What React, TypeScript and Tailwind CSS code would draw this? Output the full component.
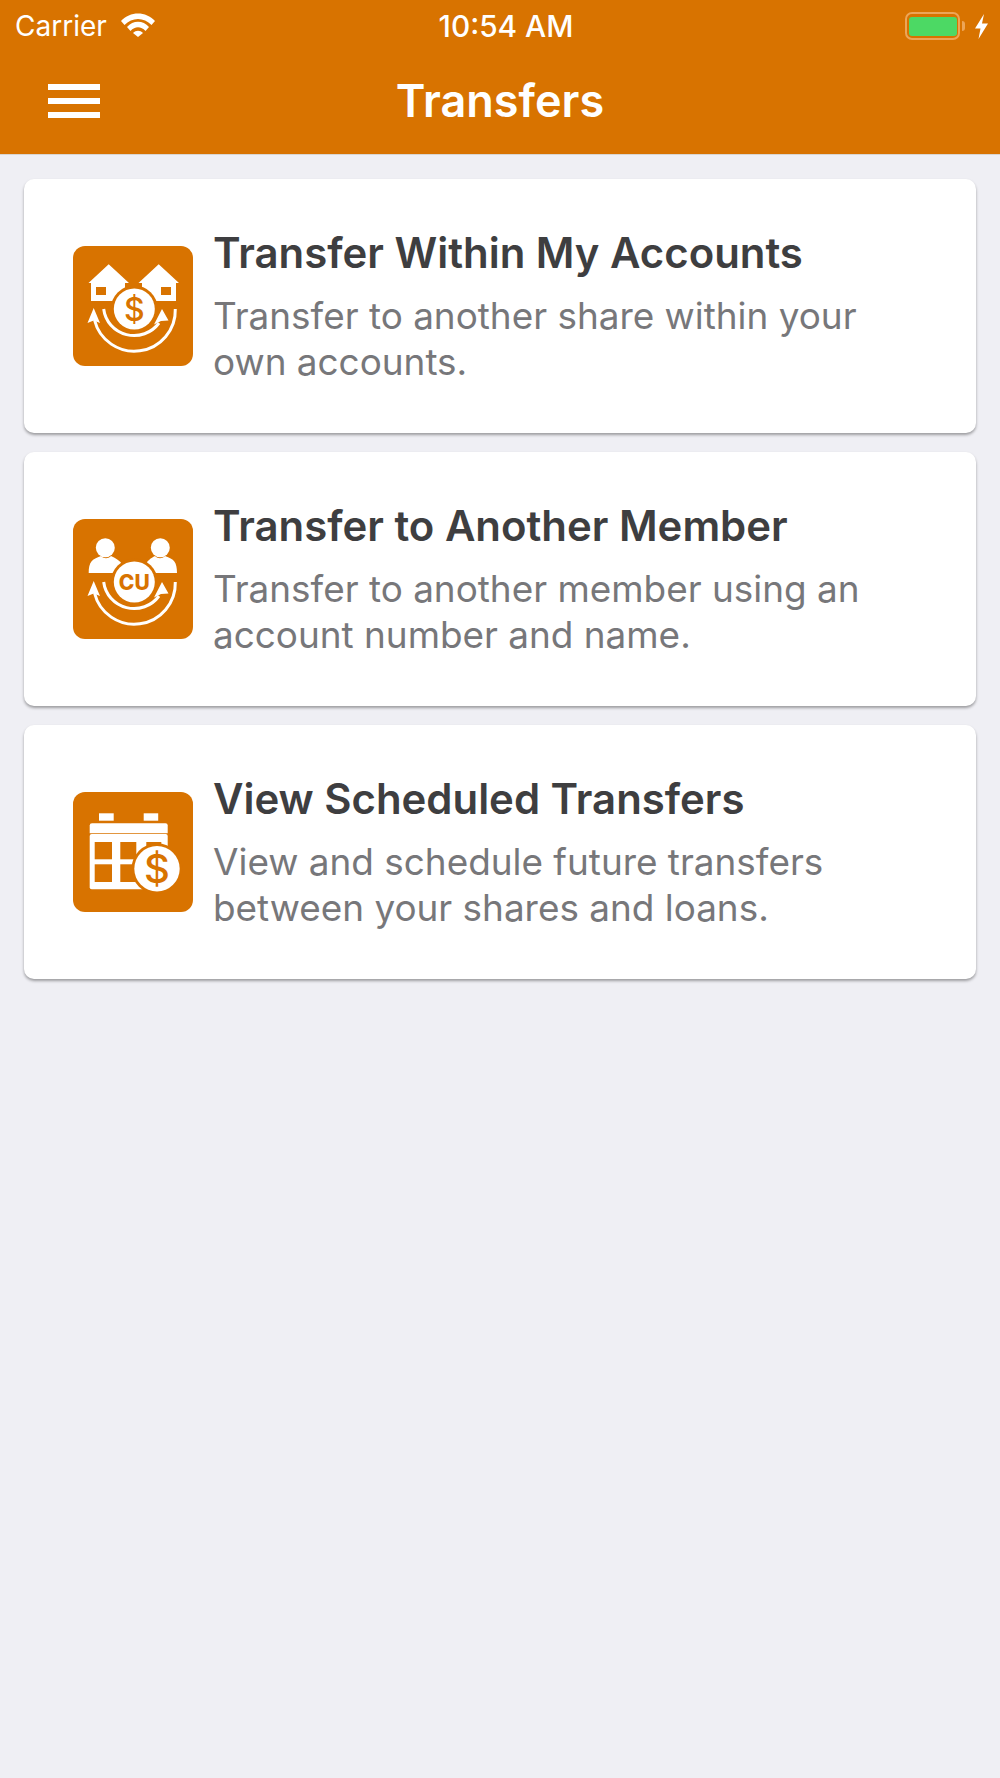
import type { ReactNode } from "react";

const ORANGE = "#d87300";

function Arcs() {
  return (
    <g>
      <path d="M30.7 63 A30.6 30 0 0 0 86 77" fill="none" stroke="#fff" strokeWidth="3" />
      <path d="M102.3 63 A41 41 0 0 1 21.5 74" fill="none" stroke="#fff" strokeWidth="3" />
      <path d="M20.7 62 L14.500 77 L20.7 74.500 L27 77 Z" fill="#fff" />
      <path d="M89 63 L81 78.500 L88 75 L95.500 74.500 Z" fill="#fff" />
    </g>
  );
}

function HousesIcon() {
  return (
    <svg viewBox="0 0 120 120" className="h-[120px] w-[120px]">
      <path d="M35.7 18.3 L56 37 L52 37 L52 55 L18 55 L18 37 L15.5 37 Z" fill="#fff" />
      <rect x="23" y="41" width="10" height="8" fill={ORANGE} />
      <path d="M85.7 18.3 L106 37 L103 37 L103 55 L69 55 L69 37 L65.5 37 Z" fill="#fff" />
      <rect x="88" y="41" width="10" height="8" fill={ORANGE} />
      <circle cx="61.3" cy="63" r="23.5" fill={ORANGE} />
      <Arcs />
      <circle cx="61.3" cy="63" r="20.5" fill="#fff" />
      <text x="61.3" y="74.500" textAnchor="middle" fontSize="32" fontWeight="500" fontFamily="Inter, sans-serif" fill={ORANGE}>$</text>
    </svg>
  );
}

function MembersIcon() {
  return (
    <svg viewBox="0 0 120 120" className="h-[120px] w-[120px]">
      <circle cx="32.3" cy="28.7" r="9.5" fill="#fff" />
      <path d="M15.7 54 C15.7 43 19 40 28 37 C31 40 35 40 38 37 C43 39 47 42 49 45 L45 54 Z" fill="#fff" />
      <circle cx="87.3" cy="28.7" r="9.5" fill="#fff" />
      <path d="M104 54 C104 43 101 40 92 37 C89 40 85 40 82 37 C78 39 74 42 73 45 L78 54 Z" fill="#fff" />
      <circle cx="61.3" cy="63" r="23.5" fill={ORANGE} />
      <Arcs />
      <circle cx="61.3" cy="63" r="20.5" fill="#fff" />
      <text x="61.3" y="70.500" textAnchor="middle" fontSize="21" fontWeight="800" fontFamily="Inter, sans-serif" fill={ORANGE}>CU</text>
    </svg>
  );
}

function CalendarIcon() {
  return (
    <svg viewBox="0 0 120 120" className="h-[120px] w-[120px]">
      <rect x="26" y="21.3" width="14.7" height="7.4" fill="#fff" />
      <rect x="70.7" y="21.3" width="14.5" height="7.4" fill="#fff" />
      <path d="M19 31.3 H92.5 Q94.7 31.3 94.7 33.5 V41.3 H16.7 V33.5 Q16.7 31.3 19 31.3 Z" fill="#fff" />
      <rect x="16.7" y="42.1" width="78" height="55.2" rx="2" fill="#fff" />
      <rect x="21.7" y="50" width="17.3" height="17.3" fill={ORANGE} />
      <rect x="47.3" y="50" width="16" height="17.3" fill={ORANGE} />
      <rect x="73.3" y="50" width="15" height="17.3" fill={ORANGE} />
      <rect x="21.7" y="72.3" width="17.3" height="17.7" fill={ORANGE} />
      <rect x="47.3" y="72.3" width="16" height="17.7" fill={ORANGE} />
      <circle cx="84" cy="76.7" r="25.5" fill={ORANGE} />
      <circle cx="84" cy="76.7" r="22.7" fill="#fff" />
      <text x="84" y="91" textAnchor="middle" fontSize="40" fontWeight="500" fontFamily="Inter, sans-serif" fill={ORANGE}>$</text>
    </svg>
  );
}

function TransferCard({ icon, title, text }: { icon: ReactNode; title: string; text: string[] }) {
  return (
    <div className="flex h-[254px] items-center gap-[20px] rounded-[10px] bg-white pl-[49px] shadow-[0_2px_3px_rgba(0,0,0,0.35)]">
      <div className="h-[120px] w-[120px] shrink-0 rounded-[12px] bg-[#d87300]">{icon}</div>
      <div className="pb-[2px]">
        <div className="text-[41.9px] leading-[54px] font-semibold text-[#3e3e40]">{title}</div>
        <div className="mt-[13px] text-[36.9px] leading-[45.5px] text-[#77777a]">
          {text.map((line) => (
            <div key={line}>{line}</div>
          ))}
        </div>
      </div>
    </div>
  );
}

export default function App() {
  return (
    <div className="flex min-h-[1778px] flex-col bg-[#efeff4] font-['Inter',sans-serif]">
      <header className="h-[155px] border-b border-[#d9d5d0] bg-[#d87300] text-white">
        <div className="grid h-[52px] grid-cols-[1fr_auto_1fr] items-center pr-[12px] pl-[15px]">
          <div className="flex items-center gap-[14px] text-[28px]">
            <span>Carrier</span>
            <svg viewBox="0 0 34 24" className="mb-[2px] h-[24px] w-[34px]" fill="#fff">
              <path d="M0 8 C9 -2 25 -2 34 8 L30.5 12 C23 4 11 4 3.500 12 Z" />
              <path d="M6 14 C12 7 22 7 28 14 L24.500 18 C20 13 14 13 9.500 18 Z" />
              <path d="M12 20 C15 17 19 17 22 20 L17 24 Z" />
            </svg>
          </div>
          <div className="ml-[9px] text-[29.8px] font-medium">10:54 AM</div>
          <div className="flex items-center justify-end gap-[10px]">
            <div className="flex items-center gap-[2px]">
              <div className="flex h-[28px] w-[55px] items-center justify-center rounded-[7px] border-2 border-[#eda557]">
                <div className="h-[19px] w-[48px] rounded-[3px] bg-[#4cd964]" />
              </div>
              <div className="h-[10px] w-[3px] rounded-r-full bg-[#eda557]" />
            </div>
            <svg viewBox="0 0 13 25" className="h-[25px] w-[13px]" fill="#fff">
              <path d="M9 0 L0 14.500 H5.500 L3.500 25 L13 9.500 H7 Z" />
            </svg>
          </div>
        </div>
        <div className="grid grid-cols-[1fr_auto_1fr] items-center pt-[24px] pl-[48px]">
          <div className="flex w-[52px] flex-col gap-[8px]">
            <div className="h-[6px] bg-white" />
            <div className="h-[6px] bg-white" />
            <div className="h-[6px] bg-white" />
          </div>
          <div className="-ml-[48px] text-[45px] leading-[50px] font-semibold">Transfers</div>
          <div />
        </div>
      </header>
      <main className="flex flex-col gap-[19px] px-[24px] pt-[24px]">
        <TransferCard
          icon={<HousesIcon />}
          title="Transfer Within My Accounts"
          text={["Transfer to another share within your", "own accounts."]}
        />
        <TransferCard
          icon={<MembersIcon />}
          title="Transfer to Another Member"
          text={["Transfer to another member using an", "account number and name."]}
        />
        <TransferCard
          icon={<CalendarIcon />}
          title="View Scheduled Transfers"
          text={["View and schedule future transfers", "between your shares and loans."]}
        />
      </main>
    </div>
  );
}
